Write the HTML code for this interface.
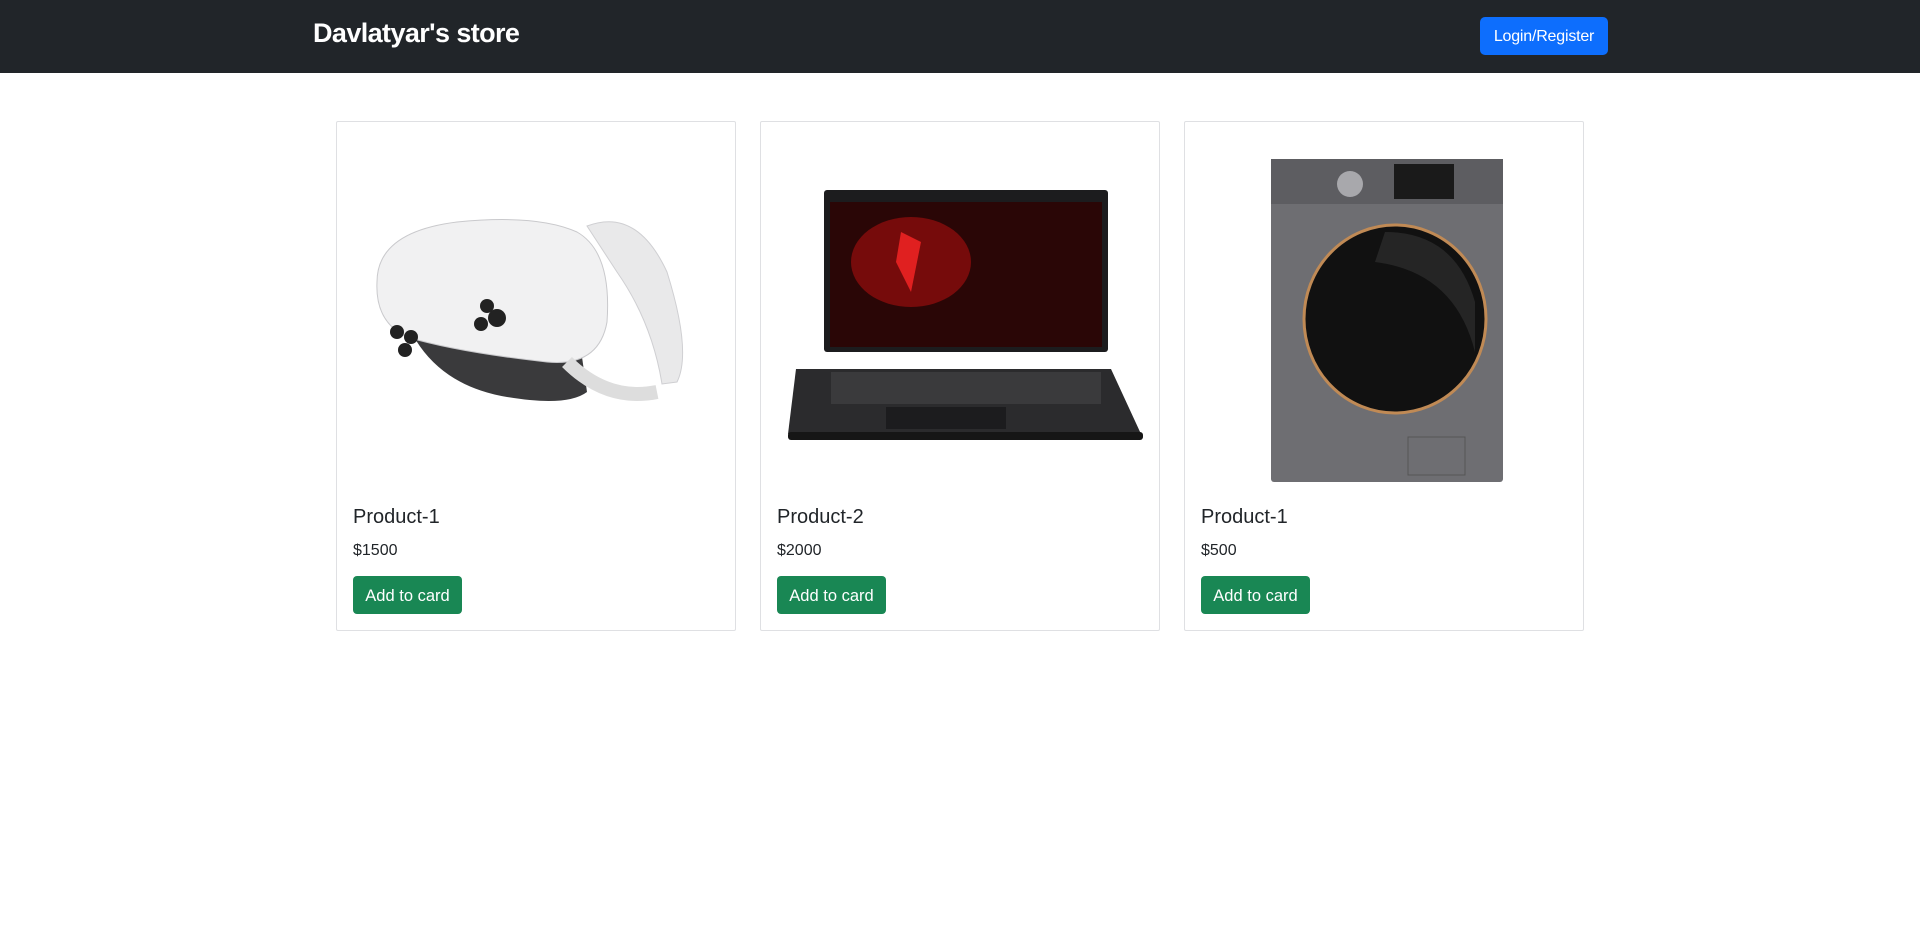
<!DOCTYPE html>
<html><head><meta charset="utf-8"><style>
*{box-sizing:border-box;margin:0;padding:0}
body{width:1920px;height:942px;background:#fff;font-family:"Liberation Sans",sans-serif;color:#212529;position:relative;overflow:hidden}
.nav{position:absolute;left:0;top:0;width:1920px;height:73px;background:#212529}
.brand{position:absolute;left:313px;top:18px;font-size:27px;font-weight:600;color:#fff;letter-spacing:-0.6px}
.login{position:absolute;left:1480px;top:17px;width:128px;height:38px;background:#0d6efd;border-radius:5px;color:#fff;font-size:16px;line-height:40px;text-align:center;letter-spacing:-0.2px}
.card{position:absolute;top:121px;width:400px;height:510px;border:1px solid #dfe0e3;border-radius:2px}
.t{position:absolute;left:16px;top:384px;font-size:20px;font-weight:500}
.p{position:absolute;left:16px;top:420px;font-size:16px}
.b{position:absolute;left:16px;top:454px;width:109px;height:38px;background:#198754;border-radius:4px;color:#fff;font-size:16.5px;line-height:40px;text-align:center}
svg{position:absolute;left:0;top:0}
</style></head><body>
<div class="nav"><div class="brand">Davlatyar's store</div><div class="login">Login/Register</div></div>

<div class="card" style="left:336px">
<svg width="400" height="380">
<path d="M250 104 Q300 85 330 150 Q355 230 340 260 L325 262 Q315 200 280 150 Z" fill="#e9e9ea" stroke="#cfcfd2"/>
<path d="M60 170 Q80 260 170 275 Q230 285 250 270 L240 200 Z" fill="#3a3a3c"/>
<path d="M40 160 Q40 110 120 100 Q200 92 240 110 Q275 130 270 200 Q262 245 210 240 Q120 230 70 215 Q38 200 40 160 Z" fill="#f1f1f2" stroke="#c9c9cc"/>
<circle cx="60" cy="210" r="7" fill="#222"/><circle cx="74" cy="215" r="7" fill="#222"/><circle cx="68" cy="228" r="7" fill="#222"/>
<circle cx="150" cy="184" r="7" fill="#222"/><circle cx="160" cy="196" r="9" fill="#222"/><circle cx="144" cy="202" r="7" fill="#222"/>
<path d="M230 240 Q270 280 320 270" stroke="#ddd" stroke-width="14" fill="none"/>
</svg>
<div class="t">Product-1</div><div class="p">$1500</div><div class="b">Add to card</div></div>

<div class="card" style="left:760px">
<svg width="400" height="380">
<rect x="63" y="68" width="284" height="162" rx="3" fill="#1c1c1e"/>
<rect x="69" y="80" width="272" height="145" fill="#2a0606"/>
<ellipse cx="150" cy="140" rx="60" ry="45" fill="#8a0d0d" opacity=".8"/>
<path d="M140 110 L160 120 L150 170 L135 140 Z" fill="#e02020"/>
<path d="M35 247 L350 247 L380 312 L27 312 Z" fill="#2b2b2d"/>
<rect x="70" y="250" width="270" height="32" fill="#3a3a3c"/>
<rect x="125" y="285" width="120" height="22" fill="#1c1c1e"/>
<rect x="27" y="310" width="355" height="8" rx="3" fill="#161616"/>
</svg>
<div class="t">Product-2</div><div class="p">$2000</div><div class="b">Add to card</div></div>

<div class="card" style="left:1184px">
<svg width="400" height="380">
<rect x="86" y="37" width="232" height="323" rx="3" fill="#6e6e72"/>
<rect x="86" y="37" width="232" height="45" fill="#5d5d61"/>
<rect x="209" y="42" width="60" height="35" fill="#1a1a1a"/>
<circle cx="165" cy="62" r="13" fill="#a8a8ac"/>
<ellipse cx="210" cy="197" rx="91" ry="94" fill="#111" stroke="#c08a55" stroke-width="3"/>
<path d="M190 140 Q270 150 290 230 L290 180 Q270 110 200 110 Z" fill="#333" opacity=".6"/>
<rect x="223" y="315" width="57" height="38" fill="none" stroke="#555"/>
</svg>
<div class="t">Product-1</div><div class="p">$500</div><div class="b">Add to card</div></div>
</body></html>
